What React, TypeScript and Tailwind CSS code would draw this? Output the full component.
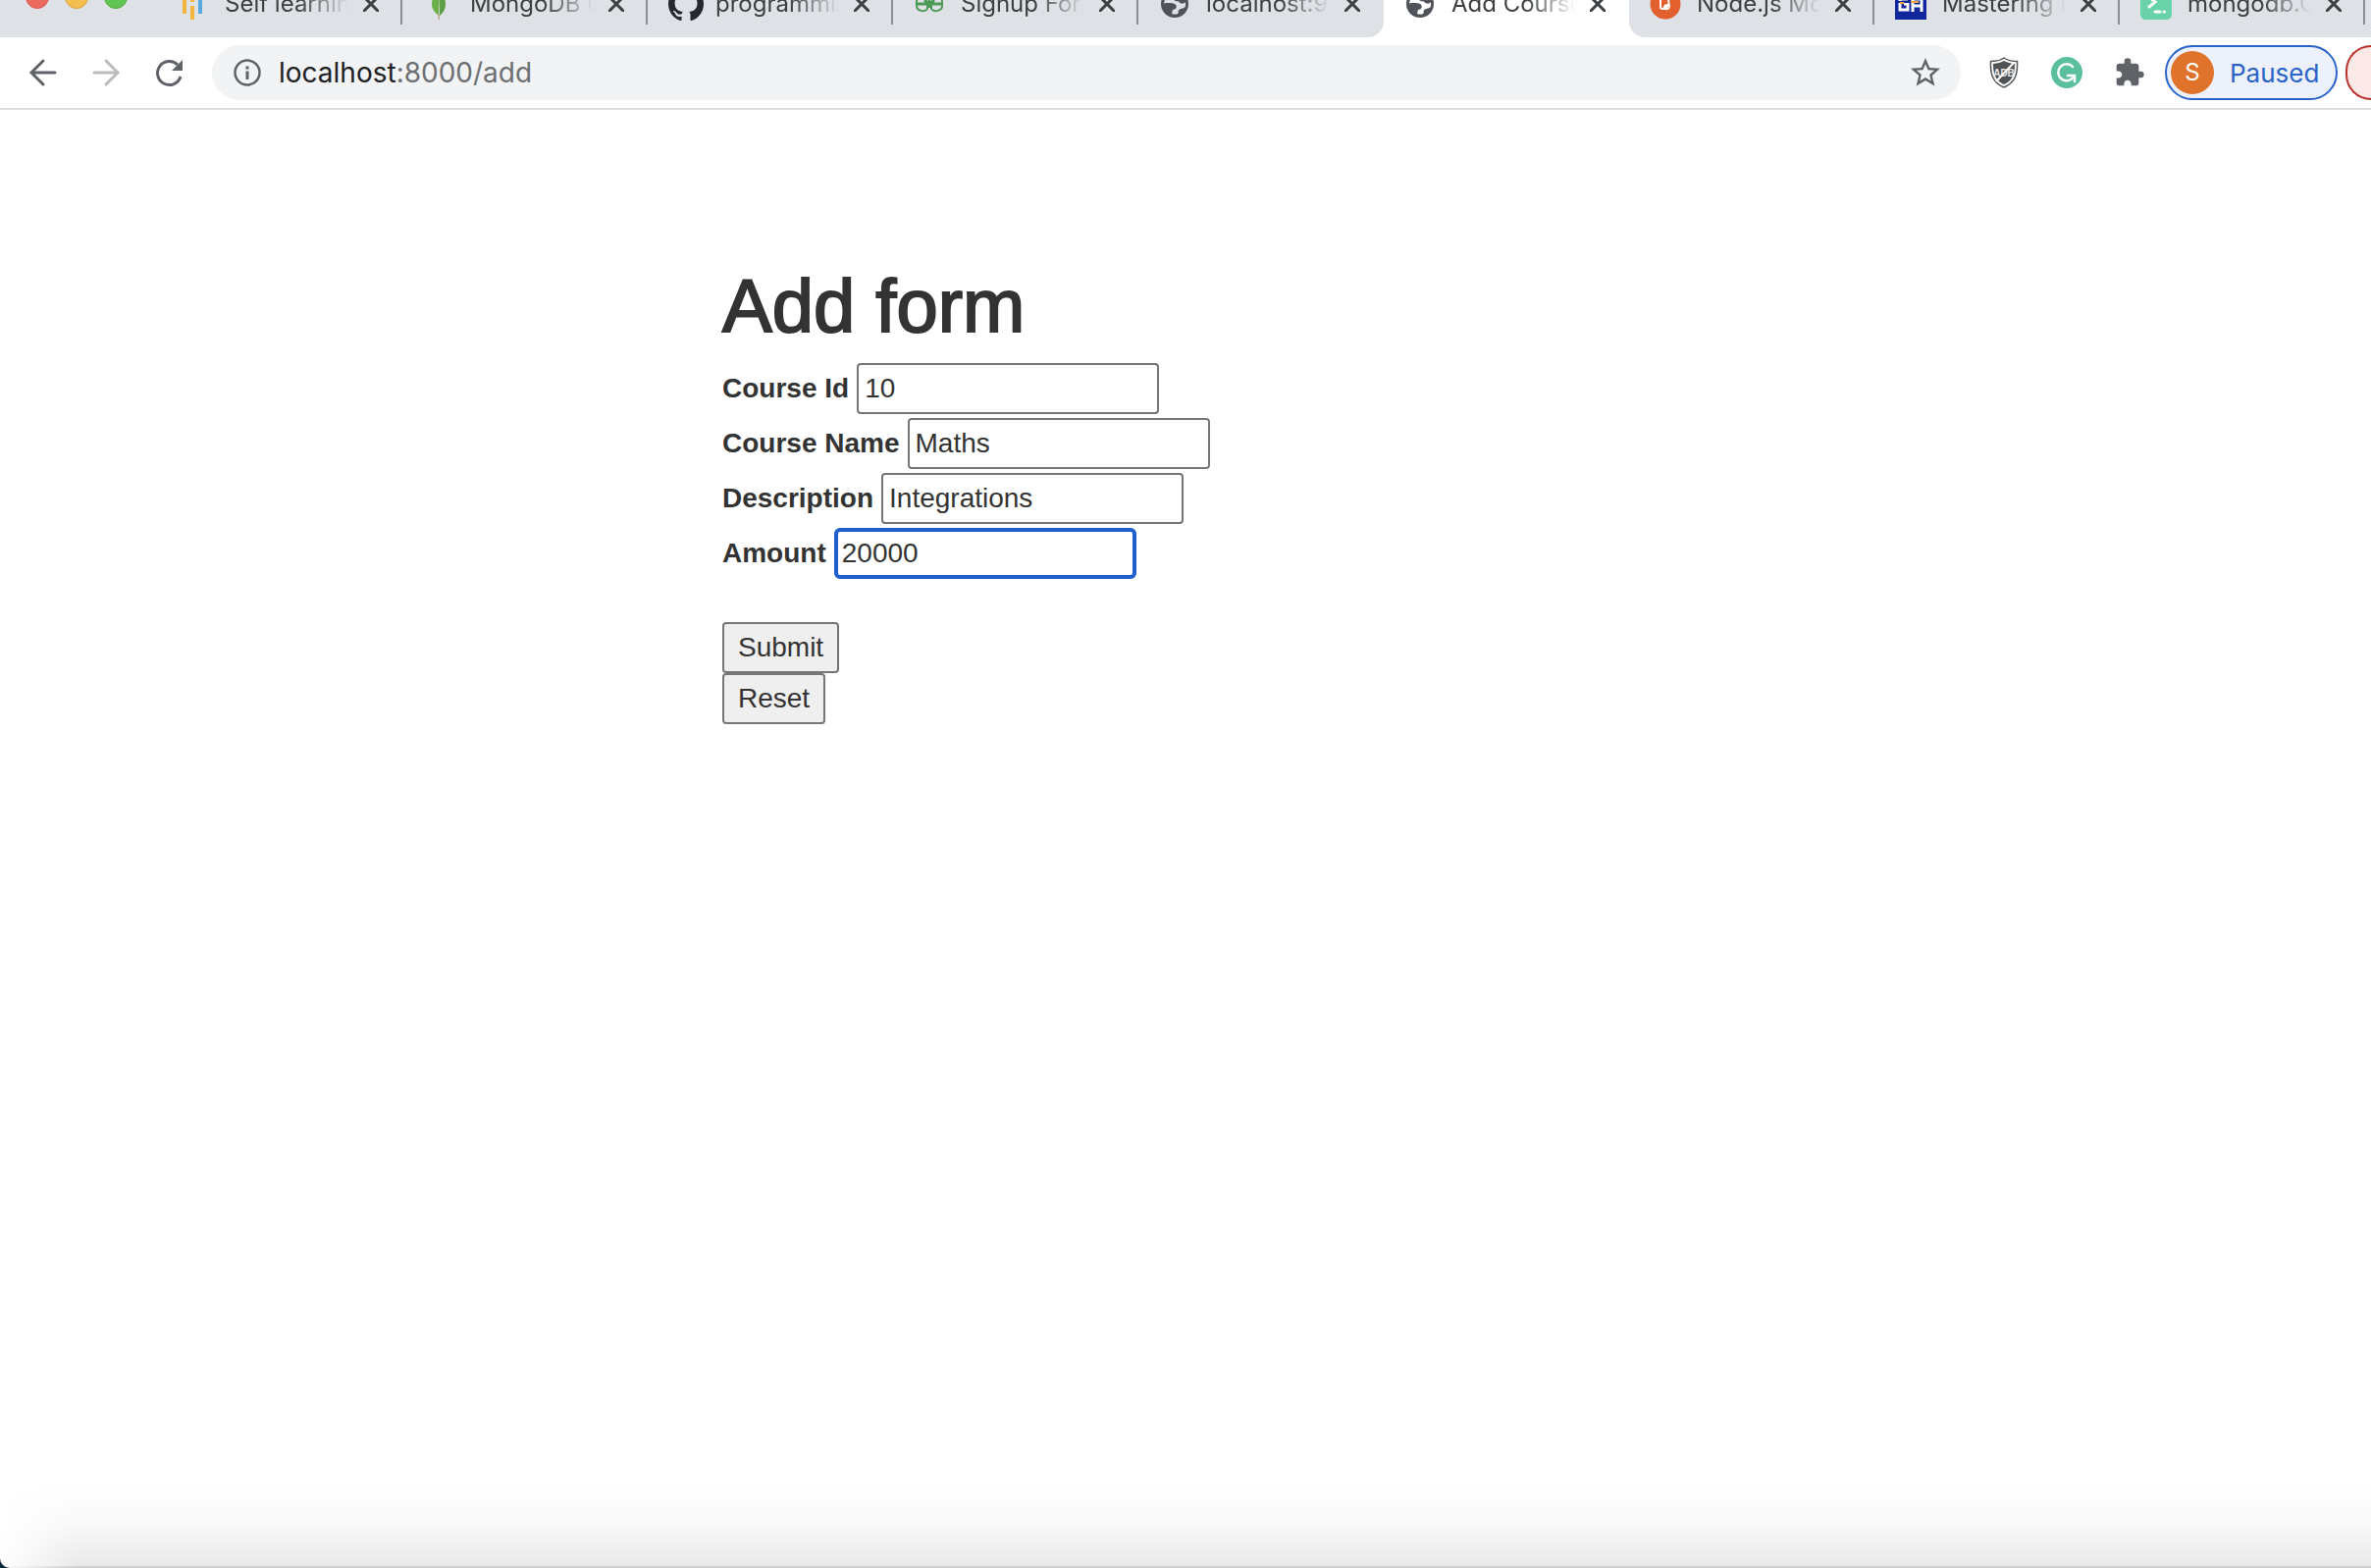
import React, { ReactNode } from "react";

const Globe = () => (
  <svg viewBox="0 0 32 32" className="size-8" aria-hidden="true">
    <circle cx="16" cy="16" r="14" fill="#50545a" />
    <path
      fill="currentColor"
      d="M5 15.500c4-.8 9-.5 11 .5 1.800 1 2.200 3 1.200 4.500-.8 1-2.200.8-3.200 1.700-.7.8-.4 2.300-1 3.800 2 .8 4.500.6 6.200 0 1-1.500 0-2.800.8-3.800 1.500-1.800 4.500-1.200 6.500-3 .6-1.700.8-3.500.4-5-1 1.200-2.600 1.600-4.200 1.400-1.600-.2-1.600-1.800-3-2.200-1.800-.4-3.600.2-4.200-1.400-.5-2 1.500-3 3-4.500V5C12 4 6 8 5 15.500z"
    />
  </svg>
);

type Tab = { title: string; icon: ReactNode; active?: boolean; beforeActive?: boolean; afterActive?: boolean };

const tabs: Tab[] = [
  {
    title: "Self learning",
    icon: (
      <svg viewBox="0 0 32 32" className="size-8" aria-hidden="true">
        <path fill="#f2b63f" d="M5 8h4v18H5zM13 18h4v14h-4zM13 8h4v6h-4z" />
        <path fill="#5aa9dd" d="M21 8h4v18h-4z" />
      </svg>
    ),
  },
  {
    title: "MongoDB Co",
    icon: (
      <svg viewBox="0 0 32 32" className="size-8" aria-hidden="true">
        <path fill="#5f9f44" d="M16 1c5 6 7 10 7 15 0 5-2 9-6 12z" />
        <path fill="#6cb04a" d="M16 1c-5 6-7 10-7 15 0 5 3 9 7 12z" />
        <path fill="#b8aa8c" d="M15.500 26h1.500v6h-1.500z" />
      </svg>
    ),
  },
  {
    title: "programming",
    icon: (
      <svg viewBox="0 0 16 16" className="size-9" aria-hidden="true">
        <path
          fill="#24292f"
          d="M8 0C3.580 0 0 3.580 0 8c0 3.540 2.290 6.530 5.470 7.590.4.070.55-.17.55-.38 0-.19-.01-.82-.01-1.490-2.010.37-2.530-.49-2.690-.94-.09-.23-.48-.94-.82-1.130-.28-.15-.68-.52-.01-.53.63-.01 1.080.58 1.230.82.72 1.210 1.870.87 2.330.66.07-.52.28-.87.51-1.070-1.780-.2-3.640-.89-3.640-3.950 0-.87.31-1.590.82-2.150-.08-.2-.36-1.020.08-2.120 0 0 .67-.21 2.200.82.64-.18 1.320-.27 2-.27s1.360.09 2 .27c1.530-1.040 2.200-.82 2.200-.82.44 1.100.16 1.920.08 2.120.51.56.82 1.270.82 2.150 0 3.070-1.870 3.750-3.650 3.950.29.25.54.73.54 1.480 0 1.070-.01 1.930-.01 2.200 0 .21.15.46.55.38A8.010 8.010 0 0 0 16 8c0-4.420-3.580-8-8-8z"
        />
      </svg>
    ),
  },
  {
    title: "Signup Form",
    icon: (
      <svg viewBox="0 0 32 32" className="size-8" fill="none" stroke="#4c9a55" strokeWidth="2" aria-hidden="true">
        <path strokeWidth="3" d="M2 16h28M11 12l5 4 5-4" />
        <path d="M14 9C8 5 3 8 3 14v4c0 5 8 7 11 3v-4M18 9c6-4 11-1 11 5v4c0 5-8 7-11 3v-4M16 10v10" />
      </svg>
    ),
  },
  { title: "localhost:90", icon: <Globe />, beforeActive: true },
  { title: "Add Course", icon: <Globe />, active: true },
  {
    title: "Node.js Mon",
    afterActive: true,
    icon: (
      <svg viewBox="0 0 32 32" className="size-8" aria-hidden="true">
        <circle cx="16" cy="16" r="15.500" fill="#e2602d" />
        <path fill="none" stroke="#fff" strokeWidth="2" d="M11 10v10c2 2 5 1 8-3M13 11h6l1 8M20 19c-1 3-6 3-5 0s4-2 5-1" />
      </svg>
    ),
  },
  {
    title: "Mastering Mo",
    icon: (
      <svg viewBox="0 0 32 32" className="size-8" aria-hidden="true">
        <path fill="#12269b" d="M0 0h32v32H0z" />
        <path fill="none" stroke="#fff" strokeWidth="3" d="M13 11H5v11h8v-6H9M18 24V11h9v13M18 18h9" />
        <path fill="#12269b" d="M3 13h13v2H3z" />
        <path fill="#f0a53c" d="M5 14h4v2H5zM16 13h8v2h-8z" />
      </svg>
    ),
  },
  {
    title: "mongodb.Coll",
    icon: (
      <svg viewBox="0 0 32 32" className="size-8" aria-hidden="true">
        <rect width="32" height="32" rx="5" fill="#69d2a8" />
        <path fill="none" stroke="#fff" strokeWidth="3" strokeLinecap="round" d="M8 8l7 6-6 5M15 24h5M24 24h.5" />
      </svg>
    ),
  },
];

function TabItem({ tab }: { tab: Tab }) {
  const shape = tab.active
    ? "bg-white text-white"
    : tab.beforeActive
      ? "rounded-br-2xl bg-[#dee1e6] text-[#dee1e6]"
      : tab.afterActive
        ? "rounded-bl-2xl bg-[#dee1e6]"
        : "bg-[#dee1e6]";
  return (
    <div className={`flex h-[38px] w-[250px] shrink-0 items-start ${shape}`}>
      <div className="-mt-3 flex h-8 w-[248px] shrink-0 items-center pl-[21px]">
        <span className="flex w-9 shrink-0 justify-start">{tab.icon}</span>
        <a
          href="#tab"
          className="ml-3 w-[126px] shrink-0 overflow-hidden whitespace-nowrap text-2xl text-[#3c4043] [mask-image:linear-gradient(to_right,black_60%,transparent)]"
        >
          {tab.title}
        </a>
        <button aria-label={`Close ${tab.title}`} className="ml-[13px] flex size-5 shrink-0 items-center justify-center">
          <svg viewBox="0 0 16 16" className="size-4" stroke="#3c4043" strokeWidth="3" strokeLinecap="round" aria-hidden="true">
            <path d="M1 1l14 14M15 1L1 15" />
          </svg>
        </button>
      </div>
      {!tab.active && !tab.beforeActive && <span className="h-[25px] w-0.5 shrink-0 bg-[#8a8d93]" />}
    </div>
  );
}

function TabStrip() {
  return (
    <div className="flex h-[38px] overflow-hidden bg-white">
      <div className="flex w-[160px] shrink-0 gap-4 bg-[#dee1e6] pl-[26px]">
        <button aria-label="Close window" className="-mt-[15px] size-6 shrink-0 rounded-full border border-[#d8594f] bg-[#ed6a5e]" />
        <button aria-label="Minimize window" className="-mt-[15px] size-6 shrink-0 rounded-full border border-[#d8a13d] bg-[#f5bf4f]" />
        <button aria-label="Zoom window" className="-mt-[15px] size-6 shrink-0 rounded-full border border-[#53a73f] bg-[#61c554]" />
      </div>
      {tabs.map((t) => (
        <TabItem key={t.title} tab={t} />
      ))}
      <div className="flex-1 bg-[#dee1e6]" />
    </div>
  );
}

function Toolbar() {
  return (
    <div className="flex h-[74px] items-center overflow-hidden border-b-2 border-[#dadce0] bg-white pl-7">
      <div className="flex shrink-0 gap-8">
        <button aria-label="Back">
          <svg viewBox="0 0 32 32" className="size-8" fill="none" stroke="#5f6368" strokeWidth="3" strokeLinecap="round" aria-hidden="true">
            <path d="M28 16H5M16 4L4 16l12 12" />
          </svg>
        </button>
        <button aria-label="Forward">
          <svg viewBox="0 0 32 32" className="size-8" fill="none" stroke="#babcbe" strokeWidth="3" strokeLinecap="round" aria-hidden="true">
            <path d="M4 16h23M16 4l12 12-12 12" />
          </svg>
        </button>
        <button aria-label="Reload">
          <svg viewBox="0 0 32 32" className="size-8" aria-hidden="true">
            <path fill="none" stroke="#5f6368" strokeWidth="3" d="M25 8A12 12 0 1 0 28 20" />
            <path fill="#5f6368" d="M30 3v11H19z" />
          </svg>
        </button>
      </div>
      <div className="ml-7 flex h-14 min-w-0 flex-1 items-center rounded-full bg-[#f1f3f4] pl-[22px] pr-[18px]">
        <svg viewBox="0 0 28 28" className="size-7 shrink-0" aria-hidden="true">
          <circle cx="14" cy="14" r="12.500" fill="none" stroke="#5f6368" strokeWidth="2.500" />
          <path fill="#5f6368" d="M12.500 12.500h3V21h-3zM12.500 7.500h3v3h-3z" />
        </svg>
        <a href="#address" className="ml-[18px] flex-1 text-[28px] leading-9 text-[#6d6f72]">
          <span className="text-[#202124]">localhost</span>:8000/add
        </a>
        <button aria-label="Bookmark this page">
          <svg viewBox="0 0 24 24" className="size-9" fill="#5f6368" aria-hidden="true">
            <path d="M22 9.240l-7.190-.62L12 2 9.190 8.630 2 9.240l5.460 4.730L5.820 21 12 17.270 18.180 21l-1.630-7.030L22 9.240zM12 15.400l-3.760 2.270 1-4.280-3.320-2.880 4.380-.38L12 6.100l1.710 4.040 4.380.38-3.320 2.880 1 4.280L12 15.400z" />
          </svg>
        </button>
      </div>
      <div className="ml-7 flex shrink-0 items-center gap-8">
        <button aria-label="AdBlock">
          <svg viewBox="0 0 32 32" className="size-8" aria-hidden="true">
            <path fill="#fff" stroke="#55585c" strokeWidth="1.500" d="M16 1c4 3 9 3.500 13.500 3.500C30 17 28 26 16 31 4 26 2 17 2.500 4.500 7 4.500 12 4 16 1z" />
            <path fill="#4f5255" d="M16 4c4 2 7 2.700 11 2.900C27 17 25 24 16 28 7 24 5 17 5 6.900 9 6.700 12 6 16 4z" />
            <text x="16" y="20" textAnchor="middle" fontSize="10" fontWeight="700" fill="#e8e8e8" fontFamily="Liberation Sans, sans-serif">
              ADB
            </text>
            <path stroke="#fff" strokeWidth="2" d="M26 6L8 25" />
          </svg>
        </button>
        <button aria-label="Grammarly">
          <svg viewBox="0 0 32 32" className="size-8" aria-hidden="true">
            <circle cx="16" cy="16" r="16" fill="#5ac09c" />
            <path fill="none" stroke="#fff" strokeWidth="2.500" strokeLinecap="round" d="M22 10a8.500 8.500 0 1 0 .5 11M17 19h7v6" />
          </svg>
        </button>
        <button aria-label="Extensions">
          <svg viewBox="0 0 24 24" className="size-8" fill="#5f6368" aria-hidden="true">
            <path d="M20.500 11H19V7c0-1.100-.9-2-2-2h-4V3.500a2.500 2.500 0 0 0-5 0V5H4c-1.100 0-1.990.9-1.990 2v3.800H3.500c1.490 0 2.700 1.210 2.700 2.700s-1.210 2.700-2.700 2.700H2V20c0 1.100.9 2 2 2h3.800v-1.500c0-1.490 1.210-2.700 2.700-2.700s2.700 1.210 2.700 2.700V22H17c1.100 0 2-.9 2-2v-4h1.500a2.500 2.500 0 0 0 0-5z" />
          </svg>
        </button>
      </div>
      <button className="ml-5 flex h-14 w-[176px] shrink-0 items-center gap-4 rounded-full border-2 border-[#2a63c9] bg-[#ecf1fb] pl-1 text-[26px] text-[#2a63c9]">
        <span className="flex size-11 shrink-0 items-center justify-center rounded-full bg-[#df732b] text-2xl text-white">S</span>
        Paused
      </button>
      <div className="ml-2 h-14 w-[26px] shrink-0 rounded-l-full border-2 border-r-0 border-[#b8312b] bg-[#fbe9e8]" />
    </div>
  );
}

const fields = [
  { id: "cid", label: "Course Id", value: "10" },
  { id: "cname", label: "Course Name", value: "Maths" },
  { id: "desc", label: "Description", value: "Integrations" },
  { id: "amount", label: "Amount", value: "20000", focused: true },
];

export default function App() {
  return (
    <div className="bg-[#06283b]">
      <div className="flex min-h-screen flex-col overflow-hidden rounded-bl-[10px] bg-white font-['Inter',sans-serif]">
        <TabStrip />
        <Toolbar />
        <form className="mx-auto mt-40 w-full max-w-[944px] font-['Liberation_Sans',sans-serif] text-[28px] leading-10 text-[#333]">
          <h1 className="mb-4 text-[76px] leading-[80px] [-webkit-text-stroke:2px_#333]">Add form</h1>
          {fields.map((f) => (
            <div key={f.id} className="flex h-14 items-center gap-2">
              <label htmlFor={f.id} className="font-bold">
                {f.label}
              </label>
              <input
                id={f.id}
                defaultValue={f.value}
                className={`h-[52px] w-[308px] bg-white outline-none ${f.focused ? "rounded-md border-4 border-[#2160cb] px-1" : "rounded border-2 border-[#767676] px-1.5"}`}
              />
            </div>
          ))}
          <div className="mt-[42px] flex flex-col items-start">
            <button type="submit" className="h-[52px] rounded border-2 border-[#767676] bg-[#efefef] px-3.5">
              Submit
            </button>
            <button type="reset" className="h-[52px] rounded border-2 border-[#767676] bg-[#efefef] px-3.5">
              Reset
            </button>
          </div>
        </form>
        <div className="mt-auto h-[90px] border-b-2 border-[#cfcfcf] bg-linear-to-b from-white via-[#f9f9f9] to-[#e9e9e9] [mask-image:linear-gradient(to_right,transparent,black_80px)]" />
      </div>
    </div>
  );
}
